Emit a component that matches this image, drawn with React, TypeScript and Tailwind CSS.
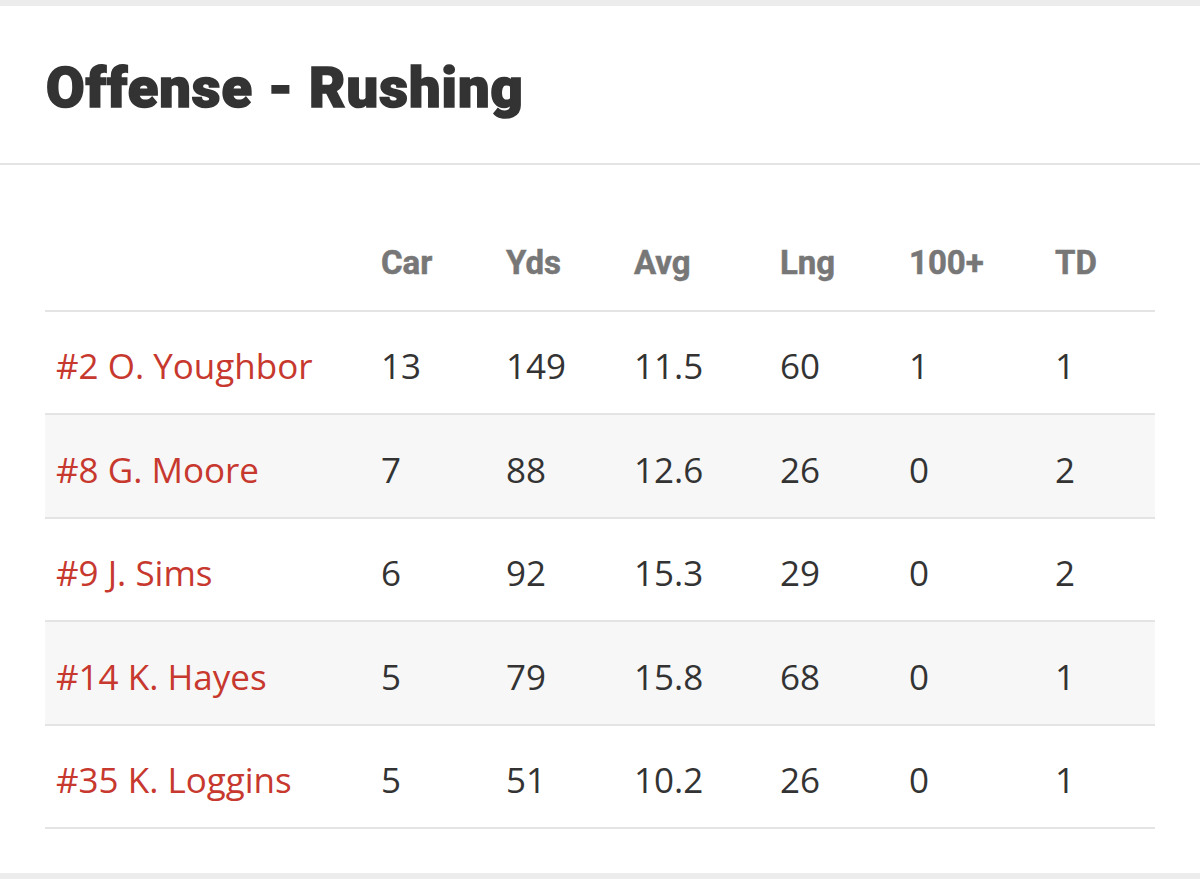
const rows = [
  { name: '#2 O. Youghbor', car: '13', yds: '149', avg: '11.5', lng: '60', hundred: '1', td: '1' },
  { name: '#8 G. Moore', car: '7', yds: '88', avg: '12.6', lng: '26', hundred: '0', td: '2' },
  { name: '#9 J. Sims', car: '6', yds: '92', avg: '15.3', lng: '29', hundred: '0', td: '2' },
  { name: '#14 K. Hayes', car: '5', yds: '79', avg: '15.8', lng: '68', hundred: '0', td: '1' },
  { name: '#35 K. Loggins', car: '5', yds: '51', avg: '10.2', lng: '26', hundred: '0', td: '1' },
];

const cols = 'grid grid-cols-[325px_125px_128px_146px_129px_146px_111px] items-center';

export default function App() {
  return (
    <div className="w-[1200px] h-[879px] bg-white flex flex-col overflow-hidden">
      <div className="h-[6px] bg-[#ececec]" />

      {/* Title */}
      <div className="h-[159px] flex items-center pl-[46px] border-b-2 border-[#e4e4e4]">
        <h1 className="font-['Roboto',sans-serif] font-black text-[56px] text-[#333] tracking-[1px] leading-none pt-[6px] [-webkit-text-stroke:1.6px_#333]">
          Offense - Rushing
        </h1>
      </div>

      {/* Table */}
      <div className="mx-[45px] mt-[43px] flex-1">
        <div className={`${cols} h-[104px] pt-[8px] border-b-2 border-[#e4e4e4] font-['Roboto',sans-serif] font-bold text-[33px] text-[#777] [-webkit-text-stroke:0.5px_#777]`}>
          <div />
          <div className="pl-[11px]">Car</div>
          <div className="pl-[11px]">Yds</div>
          <div className="pl-[11px]">Avg</div>
          <div className="pl-[11px]">Lng</div>
          <div className="pl-[11px]">100+</div>
          <div className="pl-[11px]">TD</div>
        </div>
        {rows.map((r, i) => (
          <div
            key={r.name}
            className={`${cols} h-[103.4px] pt-[8px] border-b-2 border-[#e4e4e4] font-['Open_Sans',sans-serif] text-[35px] text-[#333] ${i % 2 === 1 ? 'bg-[#f7f7f7]' : 'bg-white'}`}
          >
            <div className="pl-[11px] text-[#c7382e]">{r.name}</div>
            <div className="pl-[11px]">{r.car}</div>
            <div className="pl-[11px]">{r.yds}</div>
            <div className="pl-[11px]">{r.avg}</div>
            <div className="pl-[11px]">{r.lng}</div>
            <div className="pl-[11px]">{r.hundred}</div>
            <div className="pl-[11px]">{r.td}</div>
          </div>
        ))}
      </div>

      <div className="h-[6px] bg-[#ececec]" />
    </div>
  );
}
